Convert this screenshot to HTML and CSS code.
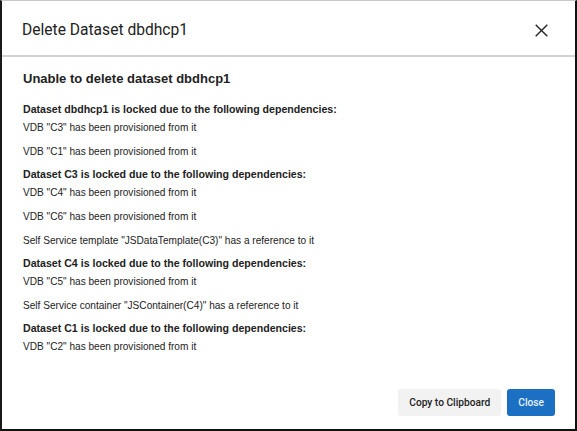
FILE: index.html
```html
<!DOCTYPE html>
<html>
<head>
<meta charset="utf-8">
<link rel="stylesheet" href="styles.css">
</head>
<body>
<div class="dialog">
  <div class="header">
    <h1 class="title">Delete Dataset dbdhcp1</h1>
    <button class="close-x" aria-label="Close">
      <svg width="13" height="13" viewBox="0 0 13 13"><path d="M0.7 0.7 L12.3 12.3 M12.3 0.7 L0.7 12.3" stroke="#222" stroke-width="1.4" fill="none"/></svg>
    </button>
  </div>
  <div class="content">
    <h2 class="main-head">Unable to delete dataset dbdhcp1</h2>
    <h3 class="dep-head">Dataset dbdhcp1 is locked due to the following dependencies:</h3>
    <p class="dep-item">VDB "C3" has been provisioned from it</p>
    <p class="dep-item">VDB "C1" has been provisioned from it</p>
    <h3 class="dep-head">Dataset C3 is locked due to the following dependencies:</h3>
    <p class="dep-item">VDB "C4" has been provisioned from it</p>
    <p class="dep-item">VDB "C6" has been provisioned from it</p>
    <p class="dep-item">Self Service template "JSDataTemplate(C3)" has a reference to it</p>
    <h3 class="dep-head">Dataset C4 is locked due to the following dependencies:</h3>
    <p class="dep-item">VDB "C5" has been provisioned from it</p>
    <p class="dep-item">Self Service container "JSContainer(C4)" has a reference to it</p>
    <h3 class="dep-head">Dataset C1 is locked due to the following dependencies:</h3>
    <p class="dep-item">VDB "C2" has been provisioned from it</p>
  </div>
  <div class="footer">
    <button class="btn btn-secondary">Copy to Clipboard</button>
    <button class="btn btn-primary">Close</button>
  </div>
</div>
</body>
</html>
```
FILE: styles.css
```css
* { box-sizing: border-box; }
html, body { margin: 0; padding: 0; }
body { width: 577px; height: 431px; overflow: hidden; background: #fff; }
.dialog {
  width: 577px;
  height: 431px;
  border-top: 1px solid #c8c8c8;
  border-left: 2px solid #1a1a1a;
  border-right: 2px solid #111;
  border-bottom: 2px solid #111;
  display: flex;
  flex-direction: column;
  background: #fff;
}
.header {
  height: 56px;
  border-bottom: 2px solid #d2d2d2;
  display: flex;
  align-items: center;
  justify-content: space-between;
  padding: 4px 27px 0 20px;
  flex-shrink: 0;
}
.title {
  margin: 0;
  font-family: Roboto, "Liberation Sans", sans-serif;
  font-weight: 400;
  font-size: 15.6px;
  line-height: 20px;
  color: #222;
}
.close-x {
  border: 0;
  background: none;
  padding: 0;
  width: 13px;
  height: 13px;
  display: flex;
}
.content {
  flex: 1;
  padding: 13px 20px 0 21px;
  font-family: "Liberation Sans", Arial, sans-serif;
  color: #222;
}
.main-head {
  margin: 0 0 14px 0;
  font-size: 13px;
  font-weight: 700;
  line-height: 18px;
}
.dep-head {
  margin: 0 0 5px 0;
  font-size: 10.6px;
  font-weight: 700;
  line-height: 14px;
}
.dep-item {
  margin: 0 0 10px 0;
  font-size: 10.1px;
  line-height: 14px;
  color: #222;
}
.dep-item + .dep-head { margin-top: -2px; }
.footer {
  display: flex;
  justify-content: flex-end;
  gap: 6px;
  padding: 0 20px 13px 0;
}
.btn {
  height: 27px;
  border: 0;
  border-radius: 3px;
  font-family: Roboto, "Liberation Sans", sans-serif;
  font-size: 10.2px;
  font-weight: 500;
  padding: 0 11px;
}
.btn-secondary { background: #f2f2f2; color: #222; }
.btn-primary { background: #1b70c3; color: #e8f1fb; }
```
